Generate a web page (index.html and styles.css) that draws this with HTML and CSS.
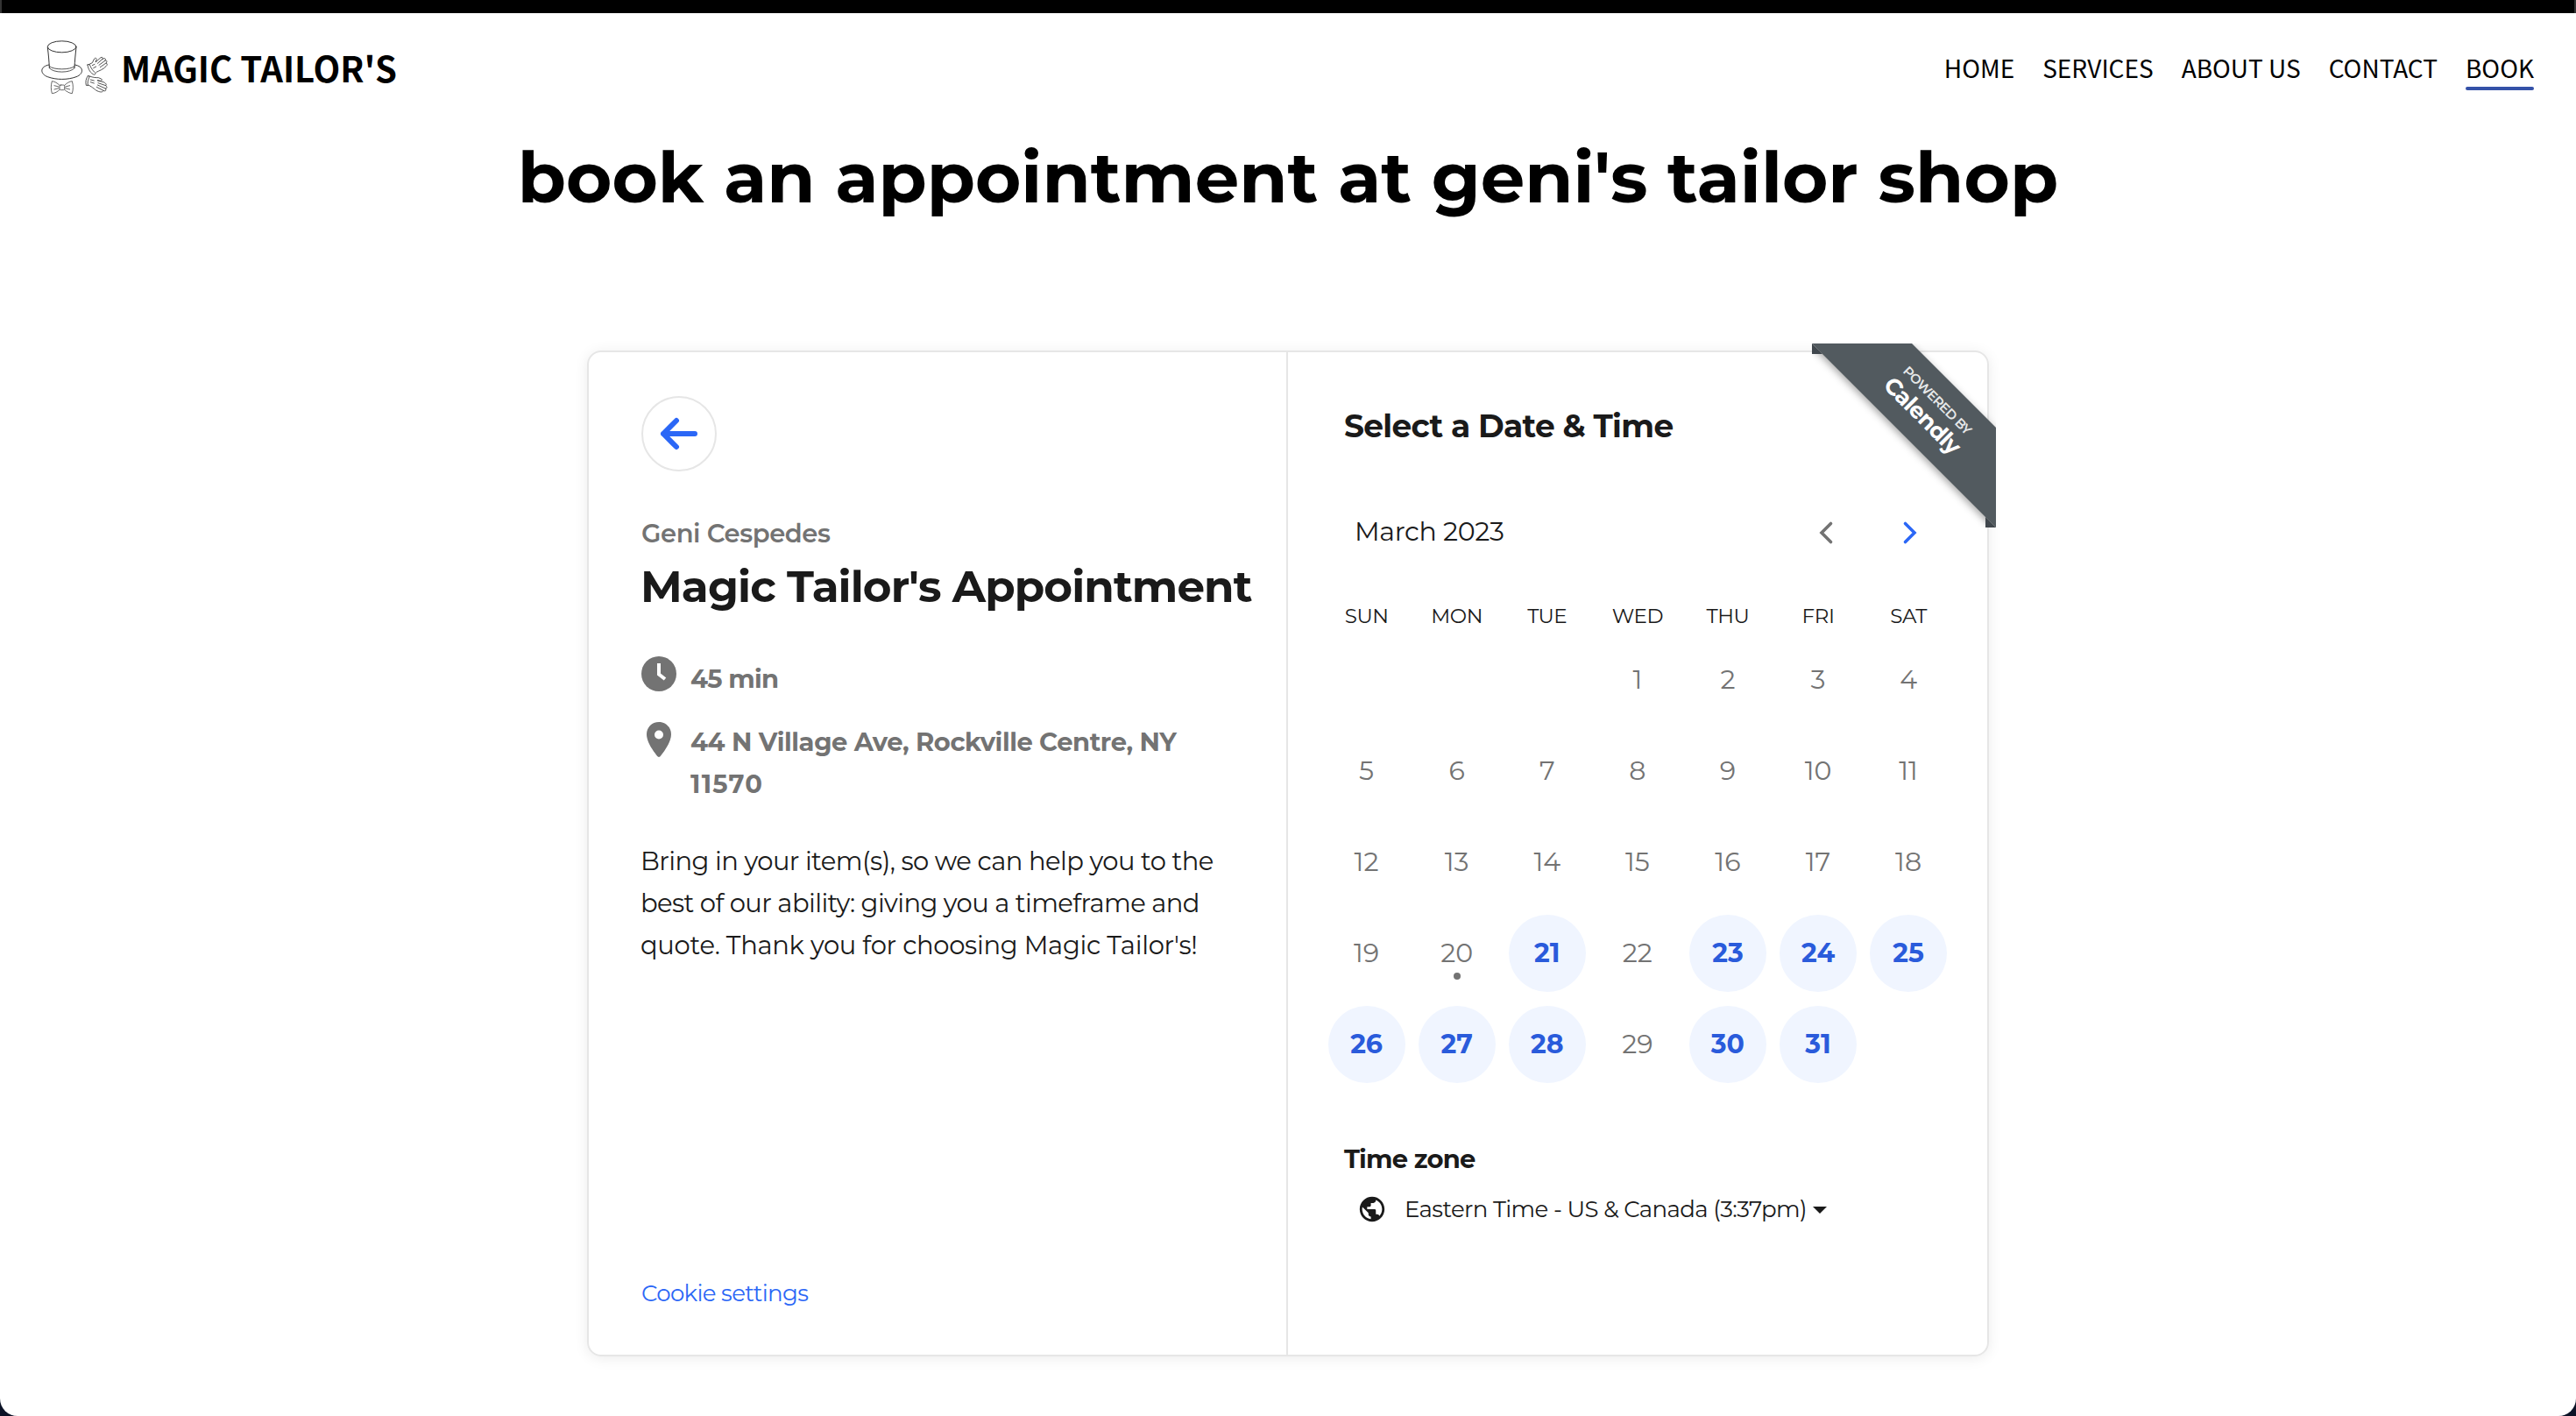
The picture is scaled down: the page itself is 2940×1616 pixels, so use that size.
FILE: index.html
```html
<!DOCTYPE html>
<html lang="en">
<head>
<meta charset="utf-8">
<title>Book - Magic Tailor's</title>
<link rel="stylesheet" href="styles.css">
</head>
<body>
<div class="window">
  <div class="topbar"></div>
  <header class="header">
    <a class="brand">
      <svg class="brand-icon" viewBox="9 12 228 186" fill="none" stroke="#333" stroke-width="3" stroke-linejoin="round" stroke-linecap="round">
        <ellipse cx="80" cy="34" rx="49" ry="19.500"/>
        <path d="M31 36C34 62 36 82 37 107M129 36C126 62 124 82 123 107"/>
        <path d="M37 101C50 114 110 114 123 101M37 107C50 125 110 125 123 107" stroke-width="2.500"/>
        <path d="M36 96C4 101 4 127 31 137C60 148 100 148 129 137C156 127 156 101 124 96"/>
        <g stroke-width="2.500" stroke="#4a4a4a">
          <path d="M72 166C64 158 55 153 46 152C42 166 42 180 46 194C57 193 65 188 72 181M89 166C97 158 106 153 115 152C119 166 119 180 115 194C105 193 97 188 89 181"/>
          <rect x="72" y="165" width="17" height="17" rx="4"/>
          <path d="M54 167L69 171M54 180L69 176M107 167L92 171M107 180L92 176"/>
        </g>
        <g stroke-width="2.500">
          <path d="M168 96L174 94C181 110 188 119 196 125L191 130C178 125 170 112 168 96Z"/>
          <path d="M174 94L184 89L191 75C195 70 200 74 198 79L195 87L213 71C219 68 222 73 218 77L224 74C230 73 231 79 227 82C234 79 236 85 231 90C236 91 236 97 231 101C220 113 209 115 198 121"/>
          <path d="M218 77L202 91M227 82L207 97M231 90L211 104M184 98L192 94M188 107L197 102"/>
          <path d="M169 134L175 135C169 148 167 157 169 167L163 166C160 155 162 143 169 134Z"/>
          <path d="M175 135C187 140 197 140 205 140L215 144C219 147 216 152 211 151L201 149L222 155C230 158 234 164 230 167C236 172 235 177 229 177C233 183 229 188 222 184C219 191 211 189 205 187C194 184 187 172 170 165"/>
          <path d="M230 167L204 158M229 177L202 165M222 184L199 172M178 147L190 150M178 155L190 159"/>
        </g>
      </svg>
      <span class="brand-name">MAGIC TAILOR'S</span>
    </a>
    <nav class="nav">
      <a class="nav-link">HOME</a>
      <a class="nav-link">SERVICES</a>
      <a class="nav-link">ABOUT US</a>
      <a class="nav-link">CONTACT</a>
      <a class="nav-link nav-link-active">BOOK</a>
    </nav>
  </header>

  <h1 class="page-title">book an appointment at geni's tailor shop</h1>

  <main class="card">
    <section class="details">
      <button class="back">
        <svg width="46" height="40" viewBox="0 0 46 40" fill="none" stroke="#2b67f6" stroke-width="6" stroke-linecap="round" stroke-linejoin="round"><path d="M41 20H5M20 5L5 20L20 35"/></svg>
      </button>
      <div class="host">Geni Cespedes</div>
      <h2 class="event">Magic Tailor's Appointment</h2>
      <div class="meta">
        <svg class="meta-icon" viewBox="0 0 40 40"><circle cx="20" cy="20" r="20" fill="#737373"/><path d="M20 8V20.500L27 26" fill="none" stroke="#fff" stroke-width="4"/></svg>
        <span class="duration">45 min</span>
      </div>
      <div class="meta meta-place">
        <svg class="meta-icon" viewBox="0 0 40 40"><path fill="#737373" fill-rule="evenodd" d="M20 0C12 0 6 6.200 6 14C6 24 16 36 18.500 39.300Q20 40.600 21.500 39.300C24 36 34 24 34 14C34 6.200 28 0 20 0ZM20 9.500A5 5 0 1 1 20 19.500A5 5 0 1 1 20 9.500Z"/></svg>
        <span class="place"><span class="street">44 N Village Ave, Rockville Centre, NY</span><br><span class="zip">11570</span></span>
      </div>
      <p class="description"><span class="line-a">Bring in your item(s), so we can help you to the</span><br><span class="line-b">best of our ability: giving you a timeframe and</span><br><span class="line-c">quote. Thank you for choosing Magic Tailor's!</span></p>
      <a class="cookies">Cookie settings</a>
    </section>

    <section class="picker">
      <h2 class="picker-title">Select a Date &amp; Time</h2>
      <div class="month">
        <span class="month-name">March 2023</span>
        <div class="month-nav">
          <svg width="24" height="28" viewBox="0 0 24 28" fill="none" stroke="#737373" stroke-width="3.600" stroke-linecap="round" stroke-linejoin="miter"><path d="M17.500 3.500L7 14L17.500 24.500"/></svg>
          <svg width="24" height="28" viewBox="0 0 24 28" fill="none" stroke="#2b67f6" stroke-width="3.600" stroke-linecap="round" stroke-linejoin="miter"><path d="M6.500 3.500L17 14L6.500 24.500"/></svg>
        </div>
      </div>
      <div class="grid weekdays">
        <span>SUN</span><span>MON</span><span>TUE</span><span>WED</span><span>THU</span><span>FRI</span><span>SAT</span>
      </div>
      <div class="grid days">
        <span class="day first-day">1</span><span class="day">2</span><span class="day">3</span><span class="day">4</span>
        <span class="day">5</span><span class="day">6</span><span class="day">7</span><span class="day">8</span><span class="day">9</span><span class="day">10</span><span class="day">11</span>
        <span class="day">12</span><span class="day">13</span><span class="day">14</span><span class="day">15</span><span class="day">16</span><span class="day">17</span><span class="day">18</span>
        <span class="day">19</span><span class="day today">20</span><span class="day open">21</span><span class="day">22</span><span class="day open">23</span><span class="day open">24</span><span class="day open">25</span>
        <span class="day open">26</span><span class="day open">27</span><span class="day open">28</span><span class="day">29</span><span class="day open">30</span><span class="day open">31</span>
      </div>
      <h3 class="zone-title">Time zone</h3>
      <div class="zone">
        <svg class="globe" viewBox="0 0 24 24" fill="#1a1a1a"><path d="M12 2C6.480 2 2 6.480 2 12s4.480 10 10 10 10-4.480 10-10S17.520 2 12 2zm-1 17.930c-3.950-.490-7-3.850-7-7.930 0-.620.080-1.210.210-1.790L9 15v1c0 1.100.900 2 2 2v1.930zm6.900-2.540c-.260-.810-1-1.390-1.900-1.390h-1v-3c0-.550-.450-1-1-1H8v-2h2c.550 0 1-.450 1-1V7h2c1.100 0 2-.900 2-2v-.410c2.930 1.190 5 4.060 5 7.410 0 2.080-.800 3.970-2.100 5.390z"/></svg>
        <span class="zone-name">Eastern Time - US &amp; Canada (3:37pm)</span>
        <svg class="caret" width="16" height="8" viewBox="0 0 16 8"><path d="M0 0H16L8 8Z" fill="#1a1a1a"/></svg>
      </div>
    </section>

    <div class="badge">
      <svg class="badge-shape" width="210" height="210" viewBox="0 0 210 210">
        <path class="badge-band" d="M0 0H114L210 96V210L0 0Z" fill="#525a5f"/>
        <path d="M0 0L12 12H0ZM198 198L210 210H198Z" fill="#40474d"/>
      </svg>
      <div class="badge-text"><span class="badge-small">POWERED BY</span><span class="badge-big">Calendly</span></div>
    </div>
  </main>
</div>
</body>
</html>
```
FILE: styles.css
```css
* { box-sizing: border-box; }

body {
  margin: 0;
  background: #0b1226;
  color: #1a1a1a;
  font-family: Montserrat, Inter, sans-serif;
  font-kerning: normal;
}

.window {
  height: 1616px;
  background: #fff;
  border-radius: 0 0 20px 20px;
  overflow: hidden;
}

.topbar {
  height: 15px;
  background: #000;
  border: solid #333;
  border-width: 0 2px;
}

.header {
  display: flex;
  align-items: center;
  justify-content: space-between;
  height: 123px;
  padding: 0 48px 0 47px;
  font-family: "Noto Sans CJK SC", "Noto Sans", sans-serif;
  color: #000;
}

.brand { display: flex; align-items: center; gap: 15px; }
.brand-icon { width: 76px; height: 62px; }
.brand-name { font-size: 40px; font-weight: 700; line-height: 54px; letter-spacing: -.05px; }

.nav { display: flex; gap: 32px; }
.nav-link { position: relative; font-size: 28px; line-height: 40px; }
.nav-link-active::after {
  content: "";
  position: absolute;
  left: 0;
  right: 0;
  bottom: -6px;
  height: 4px;
  border-radius: 2px;
  background: #3451a8;
}

.page-title {
  margin: 16px 0 0;
  text-align: center;
  font-size: 80px;
  font-weight: 700;
  line-height: 98px;
  color: #000;
}

.card {
  position: relative;
  display: flex;
  width: 1600px;
  height: 1148px;
  margin: 148px auto 0;
  border: 2px solid #e6e6e6;
  border-radius: 16px;
  box-shadow: 0 2px 16px rgba(0, 0, 0, .08);
}

.details {
  display: flex;
  flex-direction: column;
  align-items: flex-start;
  width: 798px;
  padding: 50px 0 54px 60px;
  border-right: 2px solid #e6e6e6;
}

.back {
  display: flex;
  align-items: center;
  justify-content: center;
  width: 86px;
  height: 86px;
  padding: 0;
  border: 2px solid #e6e6e6;
  border-radius: 50%;
  background: #fff;
}

.host {
  margin-top: 53px;
  font-size: 29px;
  font-weight: 650;
  line-height: 36px;
  letter-spacing: -.4px;
  color: #737373;
}

.event {
  margin: 12px 0 0 -1px;
  font-size: 50px;
  font-weight: 700;
  line-height: 62px;
  letter-spacing: -.92px;
  white-space: nowrap;
}

.meta {
  display: flex;
  gap: 16px;
  margin-top: 50px;
  font-size: 29px;
  font-weight: 700;
  line-height: 48px;
  color: #737373;
}
.meta-icon { width: 40px; height: 40px; margin-top: -2px; }
.meta-place { margin-top: 24px; }
.meta-place .meta-icon { margin-top: 1px; }
.duration { letter-spacing: -.7px; }
.street { letter-spacing: -.43px; }
.zip { letter-spacing: 1.3px; }

.description {
  margin: 40px 0 0 -1px;
  font-size: 29px;
  line-height: 48px;
  white-space: nowrap;
}
.line-a { letter-spacing: -.52px; }
.line-b { letter-spacing: -.57px; }
.line-c { letter-spacing: -.29px; }

.cookies {
  margin-top: auto;
  font-size: 26px;
  line-height: 32px;
  letter-spacing: -.63px;
  color: #2b67f6;
}

.picker { flex: 1; padding: 62px 0 0 64px; }

.picker-title {
  margin: 0;
  font-size: 36px;
  font-weight: 700;
  line-height: 44px;
  letter-spacing: -.68px;
}

.month {
  display: flex;
  align-items: center;
  justify-content: space-between;
  height: 36px;
  margin-top: 80px;
  padding: 0 76px 0 12px;
}
.month-name { padding-top: 1px; font-size: 30px; line-height: 36px; letter-spacing: -.3px; }
.month-nav { display: flex; gap: 72px; padding-top: 4px; }

.grid {
  display: grid;
  grid-template-columns: repeat(7, 103.1px);
  justify-items: center;
  margin-left: -26px;
}
.weekdays {
  margin-top: 64px;
  font-size: 23px;
  line-height: 30px;
  letter-spacing: -.45px;
}
.days { margin-top: 14px; row-gap: 16px; }

.day {
  position: relative;
  width: 88px;
  height: 88px;
  border-radius: 50%;
  font-size: 30px;
  line-height: 87px;
  text-align: center;
  color: #737373;
}
.first-day { grid-column: 4; }
.open { background: #f0f5ff; color: #2a5bdb; font-weight: 700; }
.today::after {
  content: "";
  position: absolute;
  left: 40px;
  bottom: 14px;
  width: 8px;
  height: 8px;
  border-radius: 50%;
  background: #737373;
}

.zone-title {
  margin: 69px 0 0;
  font-size: 29px;
  font-weight: 700;
  line-height: 36px;
  letter-spacing: -.8px;
}
.zone {
  display: flex;
  align-items: center;
  margin-top: 22px;
  padding-left: 15px;
  font-size: 26px;
  line-height: 32px;
}
.globe { width: 34px; height: 34px; margin-right: 20px; }
.zone-name { letter-spacing: -.59px; }
.caret { margin: 2px 0 0 7px; }

.badge {
  position: absolute;
  top: -10px;
  right: -10px;
  width: 210px;
  height: 210px;
  overflow: hidden;
}
.badge-shape { display: block; }
.badge-band { filter: drop-shadow(-1px 3px 4px rgba(0, 0, 0, .35)); }
.badge-text {
  position: absolute;
  left: 63px;
  top: 51px;
  display: flex;
  flex-direction: column;
  align-items: center;
  width: 140px;
  color: #fff;
  transform: rotate(45deg);
}
.badge-small { font-size: 15px; font-weight: 600; line-height: 20px; letter-spacing: -.55px; color: #e6e8e9; }
.badge-big { font-size: 26px; font-weight: 700; line-height: 28px; letter-spacing: -.9px; }
```
